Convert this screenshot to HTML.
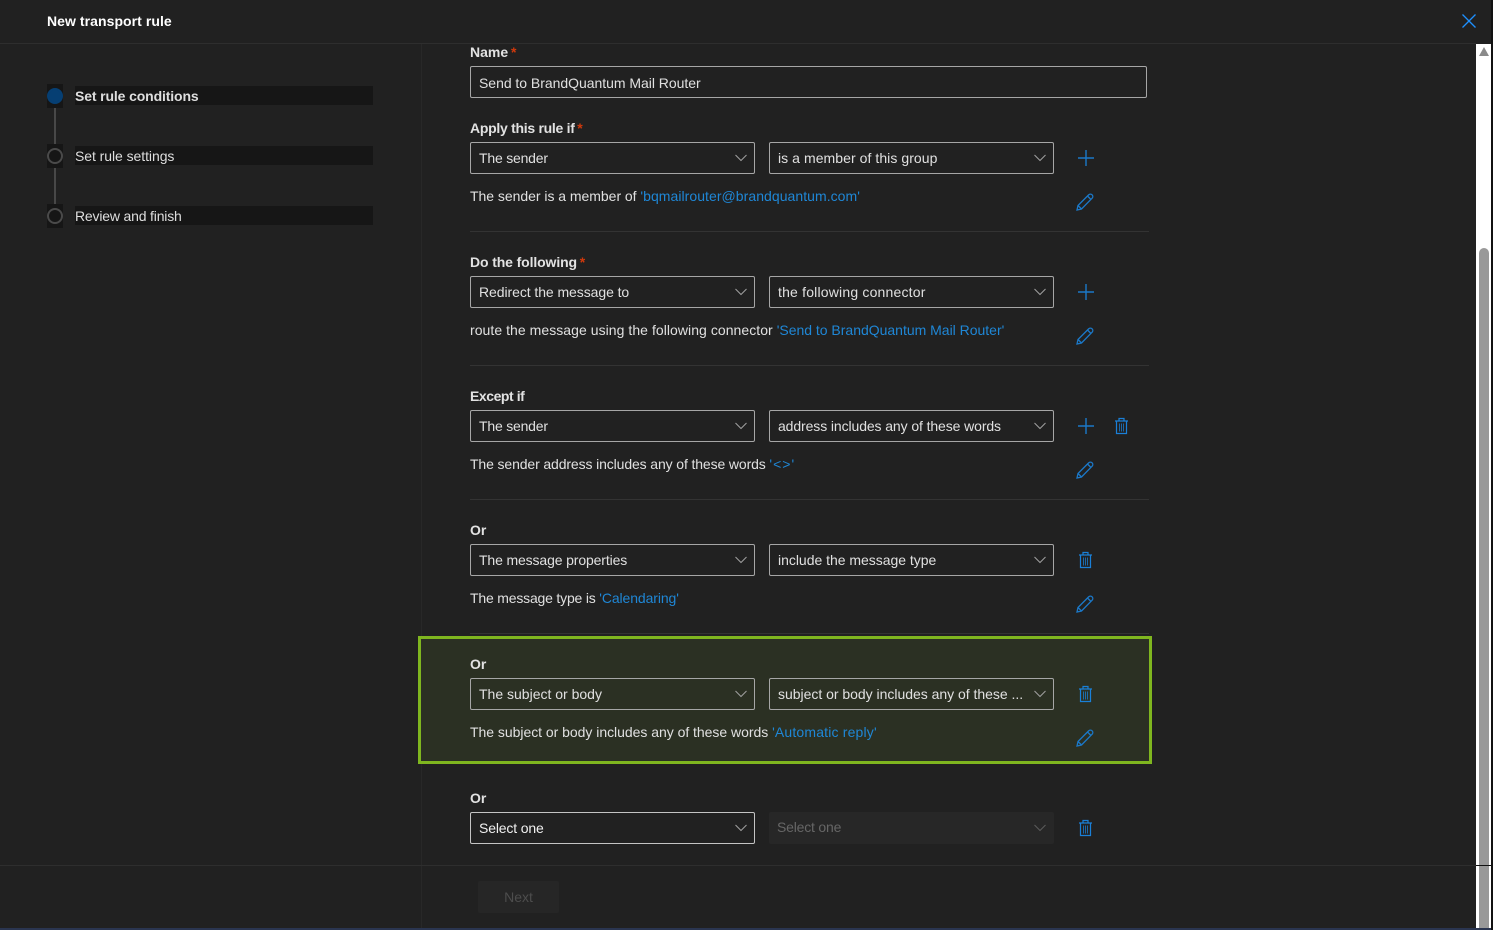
<!DOCTYPE html>
<html lang="en">
<head>
<meta charset="utf-8">
<title>New transport rule</title>
<style>
html,body{margin:0;padding:0;background:#212121;}
body{position:relative;width:1493px;height:930px;overflow:hidden;font-family:"Liberation Sans",sans-serif;font-size:14px;color:#e6e6e6;}
.a{position:absolute;white-space:nowrap;}
.lb{position:absolute;white-space:nowrap;font-weight:700;color:#e2e2e2;font-size:14px;line-height:20px;left:470px;}
.lb i{color:#d1390c;font-style:normal;font-weight:700;letter-spacing:0;margin-left:-1px;}
.dd{position:absolute;box-sizing:border-box;height:32px;border:1px solid #a6a6a6;border-radius:2px;line-height:30px;padding-left:8px;color:#e0e0e0;font-size:14px;white-space:nowrap;}
.l{left:470px;width:285px;}
.r{left:769px;width:285px;}
.dd svg{position:absolute;right:7px;top:11px;}
.t{position:absolute;left:470px;white-space:nowrap;color:#e0e0e0;font-size:14px;line-height:20px;}
.t b{font-weight:400;color:#1f87d6;}
.sep{position:absolute;left:470px;width:679px;height:1px;background:#333;}
.ic{position:absolute;}
.side{position:absolute;left:75px;width:298px;height:19px;background:#161616;color:#dedede;line-height:20px;font-size:14px;white-space:nowrap;}
.cbg{position:absolute;left:47px;width:16px;height:24px;background:#161616;}
.dot{position:absolute;left:47px;width:16px;height:16px;box-sizing:border-box;border-radius:50%;border:2px solid #4a4a4a;}
.con{position:absolute;left:54px;width:2px;height:36px;background:#484848;}
</style>
</head>
<body>
<div class="a" style="left:47px;top:11px;font-weight:700;font-size:14px;line-height:20px;color:#fff;letter-spacing:.06px;">New transport rule</div>
<svg class="ic" style="left:1461px;top:13px" width="16" height="16" viewBox="0 0 16 16"><path d="M1.5 1.5L14.5 14.5M14.5 1.5L1.5 14.5" stroke="#1e90ff" stroke-width="1.3" fill="none"/></svg>
<div class="a" style="left:0;top:43px;width:1476px;height:1px;background:#2e2e2e;"></div>
<div class="a" style="left:421px;top:44px;width:1px;height:886px;background:#282828;"></div>
<div class="a" style="left:0;top:865px;width:1476px;height:1px;background:#2e2e2e;"></div>

<div class="cbg" style="top:84px"></div>
<div class="dot" style="top:88px;background:#063f73;border-color:#063f73"></div>
<div class="con" style="top:108px"></div>
<div class="cbg" style="top:144px"></div>
<div class="dot" style="top:148px"></div>
<div class="con" style="top:168px"></div>
<div class="cbg" style="top:204px"></div>
<div class="dot" style="top:208px"></div>
<div class="side" style="top:86px;font-weight:700;letter-spacing:-.13px;">Set rule conditions</div>
<div class="side" style="top:146px;letter-spacing:-.06px;">Set rule settings</div>
<div class="side" style="top:206px;letter-spacing:-.18px;">Review and finish</div>

<div class="a" style="left:418px;top:636px;width:734px;height:128px;box-sizing:border-box;border:3px solid #7fb61f;background:#2b3023;"></div>

<div class="lb" style="top:42px">Name <i>*</i></div>
<div class="dd" style="left:470px;top:66px;width:677px;letter-spacing:-.03px;line-height:32px;">Send to BrandQuantum Mail Router</div>

<div class="lb" style="top:118px;letter-spacing:-.28px">Apply this rule if <i>*</i></div>
<div class="dd l" style="top:142px;letter-spacing:-.2px">The sender<svg width="12" height="8" viewBox="0 0 12 8"><path d="M.5 1L6 6.500L11.500 1" stroke="#a0a0a0" fill="none"/></svg></div>
<div class="dd r" style="top:142px;letter-spacing:.06px">is a member of this group<svg width="12" height="8" viewBox="0 0 12 8"><path d="M.5 1L6 6.500L11.500 1" stroke="#a0a0a0" fill="none"/></svg></div>
<svg class="ic" style="left:1077px;top:149px" width="18" height="18" viewBox="0 0 18 18"><path d="M9 1V17M1 9H17" stroke="#1b78c8" stroke-width="1.4" fill="none"/></svg>
<div class="t" style="top:186px;letter-spacing:-.03px">The sender is a member of <b style="letter-spacing:.05px">'bqmailrouter@brandquantum.com'</b></div>
<svg class="ic" style="left:1076px;top:193px" width="18" height="18" viewBox="0 0 18 18"><path d="M1 17L2 12.5L12.5 2C13.6 .9 15.2 .9 16.2 1.9C17.1 2.9 17 4.300 16 5.300L5.500 16ZM2 12.500L5.500 16M11.500 3L15 6.500" stroke="#1b78c8" stroke-width="1.300" fill="none"/></svg>
<div class="sep" style="top:231px"></div>

<div class="lb" style="top:252px;letter-spacing:-.12px">Do the following <i>*</i></div>
<div class="dd l" style="top:276px;letter-spacing:-.07px">Redirect the message to<svg width="12" height="8" viewBox="0 0 12 8"><path d="M.5 1L6 6.500L11.500 1" stroke="#a0a0a0" fill="none"/></svg></div>
<div class="dd r" style="top:276px;letter-spacing:.19px">the following connector<svg width="12" height="8" viewBox="0 0 12 8"><path d="M.5 1L6 6.500L11.500 1" stroke="#a0a0a0" fill="none"/></svg></div>
<svg class="ic" style="left:1077px;top:283px" width="18" height="18" viewBox="0 0 18 18"><path d="M9 1V17M1 9H17" stroke="#1b78c8" stroke-width="1.4" fill="none"/></svg>
<div class="t" style="top:320px;letter-spacing:.05px">route the message using the following connector <b style="letter-spacing:-.01px">'Send to BrandQuantum Mail Router'</b></div>
<svg class="ic" style="left:1076px;top:327px" width="18" height="18" viewBox="0 0 18 18"><path d="M1 17L2 12.5L12.5 2C13.6 .9 15.2 .9 16.2 1.9C17.1 2.9 17 4.300 16 5.300L5.500 16ZM2 12.500L5.500 16M11.500 3L15 6.500" stroke="#1b78c8" stroke-width="1.300" fill="none"/></svg>
<div class="sep" style="top:365px"></div>

<div class="lb" style="top:386px;letter-spacing:-.44px">Except if</div>
<div class="dd l" style="top:410px;letter-spacing:-.2px">The sender<svg width="12" height="8" viewBox="0 0 12 8"><path d="M.5 1L6 6.500L11.500 1" stroke="#a0a0a0" fill="none"/></svg></div>
<div class="dd r" style="top:410px;letter-spacing:-.1px">address includes any of these words<svg width="12" height="8" viewBox="0 0 12 8"><path d="M.5 1L6 6.500L11.500 1" stroke="#a0a0a0" fill="none"/></svg></div>
<svg class="ic" style="left:1077px;top:417px" width="18" height="18" viewBox="0 0 18 18"><path d="M9 1V17M1 9H17" stroke="#1b78c8" stroke-width="1.4" fill="none"/></svg>
<svg class="ic" style="left:1114px;top:417px" width="15" height="18" viewBox="0 0 15 18"><path d="M1 4H14M5 4V1.500H10V4M2.500 4V16.500H12.500V4" stroke="#1a80d8" stroke-width="1.200" fill="none"/><path d="M5.500 6.500V14.500M7.500 6.500V14.500M9.500 6.500V14.500" stroke="#1a80d8" stroke-width="1" opacity=".75" fill="none"/></svg>
<div class="t" style="top:454px;letter-spacing:-.12px">The sender address includes any of these words <b style="letter-spacing:1px">'&lt;&gt;'</b></div>
<svg class="ic" style="left:1076px;top:461px" width="18" height="18" viewBox="0 0 18 18"><path d="M1 17L2 12.5L12.5 2C13.6 .9 15.2 .9 16.2 1.9C17.1 2.9 17 4.300 16 5.300L5.500 16ZM2 12.500L5.500 16M11.500 3L15 6.500" stroke="#1b78c8" stroke-width="1.300" fill="none"/></svg>
<div class="sep" style="top:499px"></div>

<div class="lb" style="top:520px">Or</div>
<div class="dd l" style="top:544px;letter-spacing:-.13px">The message properties<svg width="12" height="8" viewBox="0 0 12 8"><path d="M.5 1L6 6.500L11.500 1" stroke="#a0a0a0" fill="none"/></svg></div>
<div class="dd r" style="top:544px;letter-spacing:-.02px">include the message type<svg width="12" height="8" viewBox="0 0 12 8"><path d="M.5 1L6 6.500L11.500 1" stroke="#a0a0a0" fill="none"/></svg></div>
<svg class="ic" style="left:1078px;top:551px" width="15" height="18" viewBox="0 0 15 18"><path d="M1 4H14M5 4V1.500H10V4M2.500 4V16.500H12.500V4" stroke="#1a80d8" stroke-width="1.200" fill="none"/><path d="M5.500 6.500V14.500M7.500 6.500V14.500M9.500 6.500V14.500" stroke="#1a80d8" stroke-width="1" opacity=".75" fill="none"/></svg>
<div class="t" style="top:588px;letter-spacing:-.19px">The message type is <b style="letter-spacing:-.1px">'Calendaring'</b></div>
<svg class="ic" style="left:1076px;top:595px" width="18" height="18" viewBox="0 0 18 18"><path d="M1 17L2 12.5L12.5 2C13.6 .9 15.2 .9 16.2 1.9C17.1 2.9 17 4.300 16 5.300L5.500 16ZM2 12.500L5.500 16M11.500 3L15 6.500" stroke="#1b78c8" stroke-width="1.300" fill="none"/></svg>
<div class="sep" style="top:633px"></div>

<div class="lb" style="top:654px">Or</div>
<div class="dd l" style="top:678px;letter-spacing:0">The subject or body<svg width="12" height="8" viewBox="0 0 12 8"><path d="M.5 1L6 6.500L11.500 1" stroke="#a0a0a0" fill="none"/></svg></div>
<div class="dd r" style="top:678px;letter-spacing:-.02px">subject or body includes any of these ...<svg width="12" height="8" viewBox="0 0 12 8"><path d="M.5 1L6 6.500L11.500 1" stroke="#a0a0a0" fill="none"/></svg></div>
<svg class="ic" style="left:1078px;top:685px" width="15" height="18" viewBox="0 0 15 18"><path d="M1 4H14M5 4V1.500H10V4M2.500 4V16.500H12.500V4" stroke="#1a80d8" stroke-width="1.200" fill="none"/><path d="M5.500 6.500V14.500M7.500 6.500V14.500M9.500 6.500V14.500" stroke="#1a80d8" stroke-width="1" opacity=".75" fill="none"/></svg>
<div class="t" style="top:722px;letter-spacing:-.03px">The subject or body includes any of these words <b style="letter-spacing:.17px">'Automatic reply'</b></div>
<svg class="ic" style="left:1076px;top:729px" width="18" height="18" viewBox="0 0 18 18"><path d="M1 17L2 12.5L12.5 2C13.6 .9 15.2 .9 16.2 1.9C17.1 2.9 17 4.300 16 5.300L5.500 16ZM2 12.500L5.500 16M11.500 3L15 6.500" stroke="#1b78c8" stroke-width="1.300" fill="none"/></svg>

<div class="lb" style="top:788px">Or</div>
<div class="dd l" style="top:812px;border-color:#c4c4c4;color:#f0f0f0;letter-spacing:-.15px">Select one<svg width="12" height="8" viewBox="0 0 12 8"><path d="M.5 1L6 6.500L11.500 1" stroke="#a0a0a0" fill="none"/></svg></div>
<div class="dd r" style="top:812px;border:0;background:#272727;color:#666;line-height:31px;letter-spacing:-.2px">Select one<svg style="top:12px;right:8px" width="12" height="8" viewBox="0 0 12 8"><path d="M.5 1L6 6.500L11.500 1" stroke="#5c5c5c" fill="none"/></svg></div>
<svg class="ic" style="left:1078px;top:819px" width="15" height="18" viewBox="0 0 15 18"><path d="M1 4H14M5 4V1.500H10V4M2.500 4V16.500H12.500V4" stroke="#1a80d8" stroke-width="1.200" fill="none"/><path d="M5.500 6.500V14.500M7.500 6.500V14.500M9.500 6.500V14.500" stroke="#1a80d8" stroke-width="1" opacity=".75" fill="none"/></svg>

<div class="a" style="left:478px;top:881px;width:81px;height:32px;background:#262626;border-radius:2px;text-align:center;line-height:32px;color:#4d4d4d;font-size:14px;">Next</div>

<div class="a" style="left:1476px;top:44px;width:15px;height:886px;background:#fff;"></div>
<div class="a" style="left:1479px;top:248px;width:10px;height:682px;background:#999;border-radius:5px 5px 0 0;"></div>
<svg class="ic" style="left:1478px;top:47px" width="12" height="9" viewBox="0 0 12 9"><path d="M6 0L11 9H1Z" fill="#8a8a8a"/></svg>
<div class="a" style="left:1476px;top:865px;width:15px;height:1px;background:#111;"></div>
<div class="a" style="left:1491px;top:0;width:2px;height:930px;background:#111;"></div>
<div class="a" style="left:0;top:928px;width:1491px;height:2px;background:#2a3550;"></div>
</body>
</html>
